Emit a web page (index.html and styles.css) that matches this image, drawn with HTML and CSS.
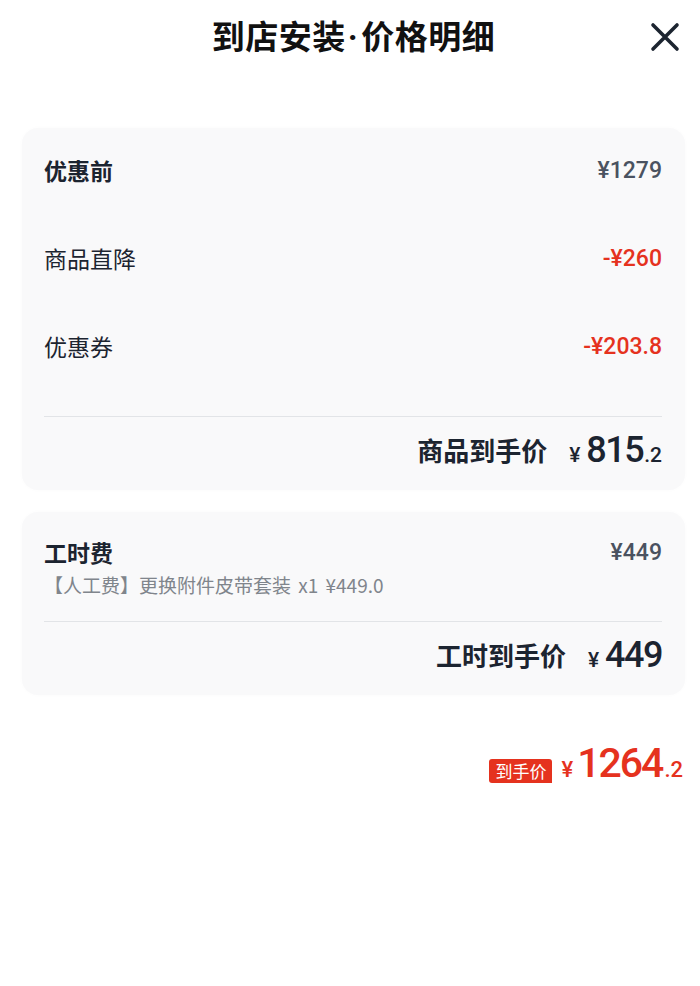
FILE: index.html
```html
<!DOCTYPE html>
<html lang="zh-CN">
<head>
    <meta charset="UTF-8">
    <meta name="viewport" content="width=device-width, initial-scale=1.0">
    <title>到店安装·价格明细</title>
    <link rel="stylesheet" href="styles.css">
</head>
<body>
    <div class="page">
        <div class="header">
            <h1 class="title">到店安装<span class="dot">·</span>价格明细</h1>
            <div class="close">
                <svg width="30" height="30" viewBox="0 0 30 30">
                    <path d="M3 3 L27 27 M27 3 L3 27" stroke="#1c2430" stroke-width="3.6" stroke-linecap="round" fill="none"/>
                </svg>
            </div>
        </div>

        <div class="card">
            <div class="row">
                <span class="label bold">优惠前</span>
                <span class="value">¥1279</span>
            </div>
            <div class="row">
                <span class="label">商品直降</span>
                <span class="value red">-¥260</span>
            </div>
            <div class="row">
                <span class="label">优惠券</span>
                <span class="value red">-¥203.8</span>
            </div>
            <div class="divider"></div>
            <div class="sum">
                <span class="sum-label">商品到手价</span>
                <span class="price"><span class="yen">¥</span><span class="int">815</span><span class="dec">.2</span></span>
            </div>
        </div>

        <div class="card card-labor">
            <div class="labor-head">
                <span class="label bold">工时费</span>
                <span class="value">¥449</span>
            </div>
            <div class="sub">【人工费】更换附件皮带套装 x1 ¥449.0</div>
            <div class="divider"></div>
            <div class="sum">
                <span class="sum-label">工时到手价</span>
                <span class="price"><span class="yen">¥</span><span class="int">449</span></span>
            </div>
        </div>

        <div class="total">
            <span class="badge">到手价</span>
            <span class="total-price"><span class="yen">¥</span><span class="int">1264</span><span class="dec">.2</span></span>
        </div>
    </div>
</body>
</html>
```

FILE: styles.css
```css
body {
    margin: 0;
    background: #fff;
    font-family: Roboto, "Noto Sans CJK SC", sans-serif;
    color: #1c2430;
}

.page {
    padding: 0 15px 0 22px;
}

.header {
    position: relative;
    height: 74px;
    display: flex;
    align-items: center;
    justify-content: center;
}

.title {
    margin: 0 0 4px;
    font-size: 33px;
    font-weight: 700;
    font-family: "Noto Sans CJK SC", sans-serif;
    color: #111;
    letter-spacing: 0.5px;
}

.title .dot {
    font-family: Roboto, sans-serif;
    margin: 0 3px 0 2px;
}

.close {
    position: absolute;
    right: 5px;
    top: 22px;
    width: 30px;
    height: 30px;
}

.card {
    margin-top: 54px;
    background: #f9f9fa;
    border-radius: 16px;
    padding: 0 23px 0 22px;
    box-shadow: 0 0 4px rgba(0, 0, 0, 0.02);
}

.row {
    height: 88px;
    display: flex;
    align-items: center;
    justify-content: space-between;
    padding-bottom: 4px;
    box-sizing: border-box;
}

.label {
    font-family: "Noto Sans CJK SC", sans-serif;
    font-size: 23px;
    color: #1c2430;
}

.bold {
    font-weight: 700;
}

.value {
    font-size: 23px;
    font-weight: 500;
    color: #4a5260;
}

.red {
    color: #e5321e;
}

.divider {
    height: 1px;
    background: #e2e4e7;
    margin-top: 24px;
}

.sum {
    height: 73px;
    display: flex;
    align-items: center;
    justify-content: flex-end;
    padding-bottom: 8px;
    box-sizing: border-box;
}

.sum-label {
    font-family: "Noto Sans CJK SC", sans-serif;
    font-size: 26px;
    font-weight: 700;
    margin-right: 22px;
}

.price {
    font-weight: 500;
    color: #1c2430;
}

.price .yen {
    font-size: 21px;
    margin-right: 6px;
}

.price .int {
    font-size: 36px;
    letter-spacing: -1.5px;
}

.price .dec {
    font-size: 21px;
    margin-left: 1px;
}

.card-labor {
    margin-top: 22px;
    padding-top: 22px;
}

.labor-head {
    display: flex;
    justify-content: space-between;
    align-items: center;
    height: 36px;
}

.sub {
    font-family: "Noto Sans CJK SC", sans-serif;
    font-size: 19px;
    color: #80858c;
    margin-top: 2px;
    line-height: 26px;
    word-spacing: 3px;
}

.card-labor .divider {
    margin-top: 23px;
}

.card-labor .sum {
    height: 73px;
}

.total {
    margin-top: 44px;
    display: flex;
    justify-content: flex-end;
    align-items: baseline;
    padding-right: 2px;
}

.badge {
    position: relative;
    top: 1px;
    background: #e5321e;
    color: #fff;
    font-family: "Noto Sans CJK SC", sans-serif;
    font-size: 17px;
    line-height: 24px;
    padding: 0 6px;
    border-radius: 3px 3px 0 3px;
    margin-right: 9px;
}

.total-price {
    color: #e5321e;
    font-weight: 500;
}

.total-price .yen {
    font-size: 22px;
    margin-right: 4px;
}

.total-price .int {
    font-size: 41px;
    letter-spacing: -2px;
}

.total-price .dec {
    font-size: 22px;
    margin-left: 2px;
}
```
